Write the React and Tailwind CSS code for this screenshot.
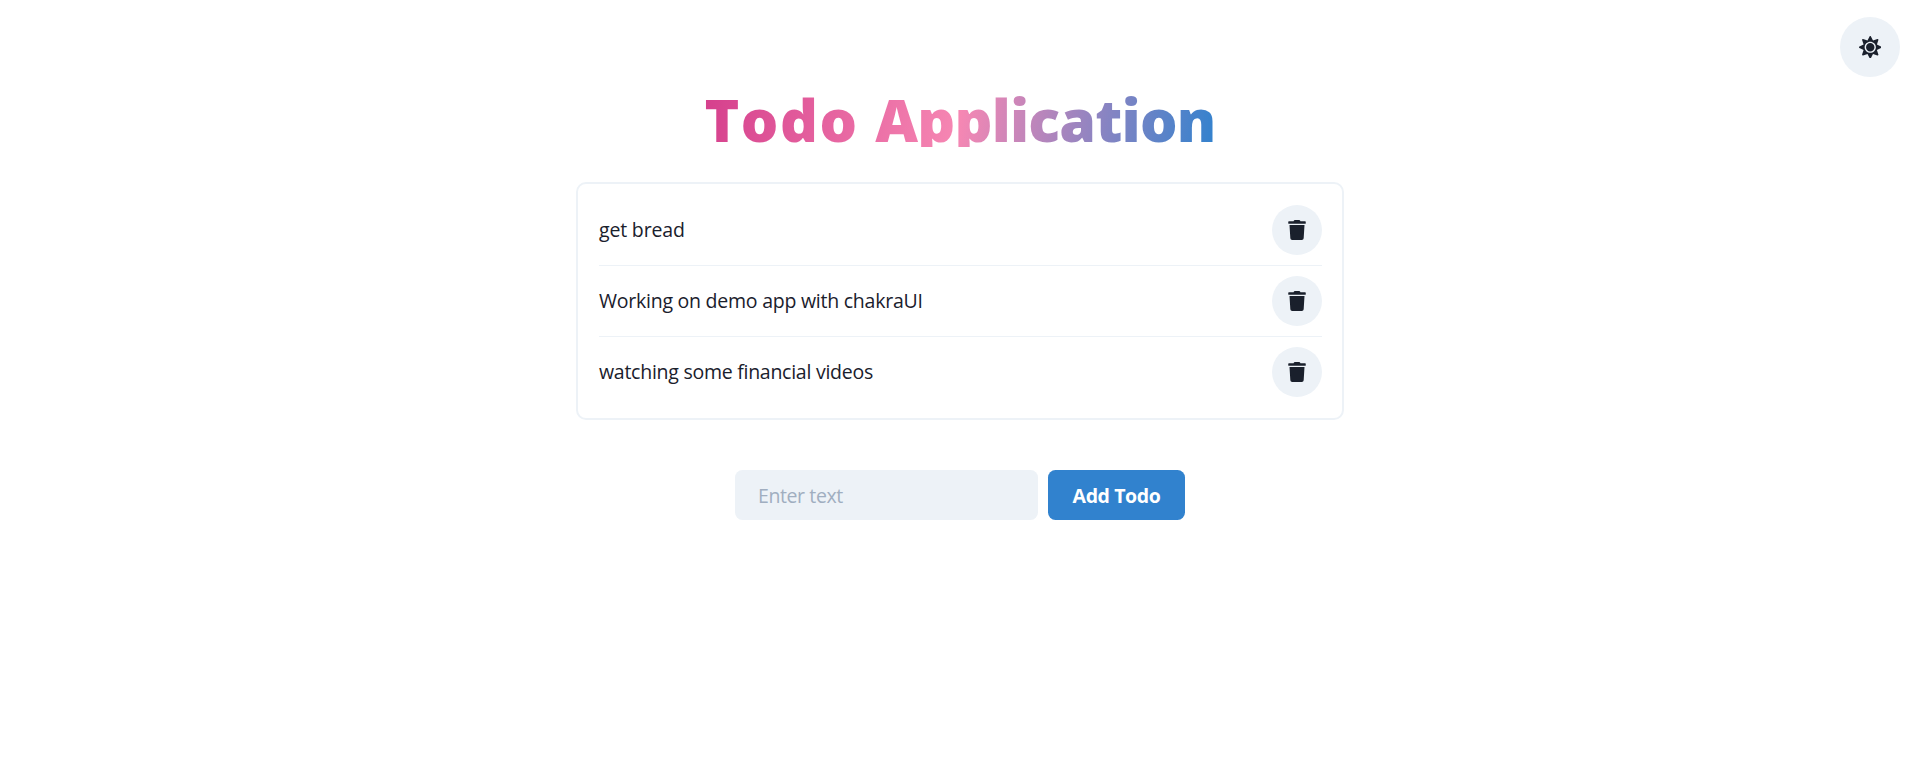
import { FaSun, FaTrash } from "react-icons/fa";

const todos = [
  { text: "get bread", tracking: "tracking-[-0.17px]" },
  { text: "Working on demo app with chakraUI", tracking: "tracking-[-0.24px]" },
  { text: "watching some financial videos", tracking: "tracking-[-0.26px]" },
];

export default function App() {
  return (
    <div className="flex min-h-[760px] flex-col items-center bg-white px-5 pt-[17px] font-['Open_Sans',sans-serif] text-[19.5px] leading-[30px] text-[#1a202c]">
      <button aria-label="toggle theme" className="flex size-[60px] shrink-0 items-center justify-center self-end rounded-full bg-[#edf2f7] text-[22.5px]">
        <FaSun />
      </button>
      <h1 className="mt-[10px] h-[60px] bg-[linear-gradient(100deg,#d53f8c,#f687b3,#3182ce)] bg-clip-text text-[59px] font-extrabold leading-[65px] whitespace-nowrap text-transparent">
        <span className="tracking-[1.5px]">Todo </span>
        <span className="tracking-[-0.8px]">Application</span>
      </h1>
      <ul className="mt-[35px] flex w-[768px] flex-col rounded-[10px] border-2 border-[#edf2f7] py-[21px] pr-5 pl-[21px]">
        {todos.map((todo, i) => (
          <li key={todo.text} className={i ? "mt-[10px] flex items-center justify-between border-t border-[#edf2f7] pt-[10px]" : "flex items-center justify-between"}>
            <span className={todo.tracking}>{todo.text}</span>
            <button aria-label="delete todo" className="flex size-[50px] items-center justify-center rounded-full bg-[#edf2f7] text-[20px]">
              <FaTrash />
            </button>
          </li>
        ))}
      </ul>
      <form className="mt-[50px] flex gap-[10px]" onSubmit={(e) => e.preventDefault()}>
        <input placeholder="Enter text" className="h-[50px] w-[303px] rounded-[7.5px] bg-[#edf2f7] px-[23px] tracking-[-0.4px] outline-none placeholder:text-[#a0aec0]" />
        <button className="h-[50px] w-[137px] rounded-[7.5px] bg-[#3182ce] pt-px font-bold tracking-[-0.4px] whitespace-nowrap text-white">
          Add Todo
        </button>
      </form>
    </div>
  );
}
